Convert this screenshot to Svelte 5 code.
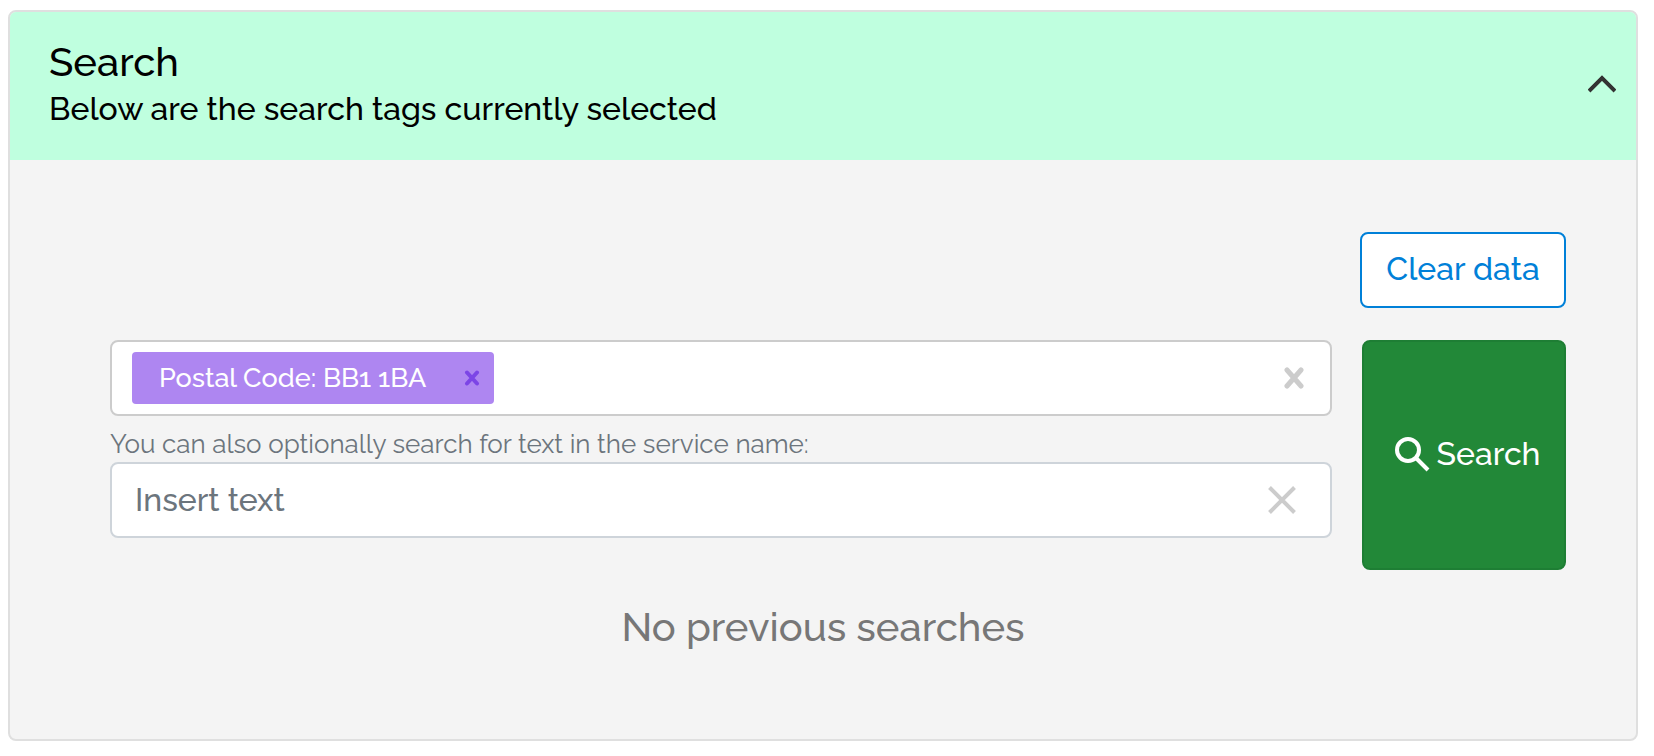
<script lang="ts">
  type Tag = { id: number; label: string; value: string };

  let open = $state(true);
  let tags = $state<Tag[]>([{ id: 1, label: 'Postal Code', value: 'BB1 1BA' }]);
  let serviceName = $state('');

  function removeTag(id: number): void {
    tags = tags.filter((tag) => tag.id !== id);
  }

  function clearTags(): void {
    tags = [];
  }

  function clearText(): void {
    serviceName = '';
  }

  function clearData(): void {
    clearTags();
    clearText();
  }
</script>

<section class="card">
  <header class="card-header">
    <div class="heading">
      <h2>Search</h2>
      <p>Below are the search tags currently selected</p>
    </div>
    <button
      type="button"
      class="icon-button toggle"
      class:closed={!open}
      aria-expanded={open}
      aria-label="Toggle search panel"
      onclick={() => (open = !open)}
    >
      <svg width="28" height="20" viewBox="0 0 28 20" aria-hidden="true">
        <path d="M1 16 L14 3 L27 16" />
      </svg>
    </button>
  </header>

  {#if open}
    <div class="card-body">
      <div class="actions">
        <button type="button" class="clear-data" onclick={clearData}>Clear data</button>
      </div>

      <form class="search-form" onsubmit={(event) => event.preventDefault()}>
        <div class="fields">
          <div class="field tags-field">
            <div class="tags">
              {#each tags as tag (tag.id)}
                <span class="tag">
                  <span>{tag.label}: {tag.value}</span>
                  <button
                    type="button"
                    class="icon-button remove"
                    aria-label={`Remove ${tag.label}`}
                    onclick={() => removeTag(tag.id)}
                  >
                    <svg width="16" height="16" viewBox="0 0 16 16" aria-hidden="true">
                      <path d="M3 2.5 L13 13.5 M13 2.5 L3 13.5" />
                    </svg>
                  </button>
                </span>
              {/each}
            </div>
            <button type="button" class="icon-button clear-tags" aria-label="Clear tags" onclick={clearTags}>
              <svg width="20" height="22" viewBox="0 0 20 22" aria-hidden="true">
                <path d="M3 3 L17 19 M17 3 L3 19" />
              </svg>
            </button>
          </div>

          <label for="service-name">You can also optionally search for text in the service name:</label>

          <div class="field text-field">
            <input id="service-name" type="text" placeholder="Insert text" bind:value={serviceName} />
            <button type="button" class="icon-button clear-text" aria-label="Clear text" onclick={clearText}>
              <svg width="28" height="28" viewBox="0 0 28 28" aria-hidden="true">
                <path d="M1.5 1.5 L26.5 26.5 M26.5 1.5 L1.5 26.5" />
              </svg>
            </button>
          </div>
        </div>

        <button type="submit" class="submit">
          <svg width="36" height="36" viewBox="0 0 36 36" aria-hidden="true">
            <circle cx="14" cy="14" r="11" />
            <path d="M22 22 L34 34" />
          </svg>
          <span>Search</span>
        </button>
      </form>

      <p class="empty">No previous searches</p>
    </div>
  {/if}
</section>

<style>
  :global(body) {
    background: #ffffff;
  }

  .card {
    margin: 10px 16px 16px 8px;
    border: 2px solid #dfdfdf;
    border-radius: 8px;
    background: #f4f4f4;
    font-family: Raleway, 'Open Sans', sans-serif;
    font-size: 32px;
    font-weight: 500;
    line-height: 48px;
    overflow: hidden;
  }

  h2,
  p {
    margin: 0;
    font-weight: 500;
  }

  button,
  input {
    box-sizing: border-box;
    font: inherit;
  }

  button {
    cursor: pointer;
  }

  .card-header {
    display: flex;
    align-items: center;
    justify-content: space-between;
    padding: 26px 20px 28px 39px;
    background: #bfffdf;
    color: #000000;
  }

  h2 {
    font-size: 40px;
    line-height: 48px;
  }

  .heading p {
    line-height: 46px;
  }

  .icon-button {
    display: flex;
    padding: 0;
    border: 0;
    background: transparent;
  }

  svg {
    flex: none;
    fill: none;
    stroke: currentColor;
  }

  .toggle {
    color: #333333;
    stroke-width: 4;
  }

  .toggle.closed {
    transform: rotate(180deg);
  }

  .card-body {
    padding: 72px 70px 84px 100px;
  }

  .actions {
    display: flex;
    justify-content: flex-end;
    margin-bottom: 32px;
  }

  .clear-data {
    min-width: 206px;
    height: 76px;
    padding: 0 16px 2px;
    border: 2px solid #0080d8;
    border-radius: 8px;
    background: #ffffff;
    color: #0080d8;
  }

  .search-form {
    display: flex;
    gap: 30px;
  }

  .fields {
    flex: 1;
    min-width: 0;
  }

  .field {
    box-sizing: border-box;
    display: flex;
    align-items: center;
    min-height: 76px;
    border: 2px solid #cccccc;
    border-radius: 8px;
    background: #ffffff;
  }

  .tags-field {
    padding: 10px 26px 10px 20px;
  }

  .tags {
    flex: 1;
    display: flex;
    flex-wrap: wrap;
    gap: 8px;
  }

  .tag {
    display: flex;
    align-items: center;
    gap: 38px;
    padding: 2px 14px 2px 27px;
    border-radius: 4px;
    background: #ae86f1;
    color: #ffffff;
    font-size: 27px;
  }

  .remove {
    color: #7c45e6;
    stroke-width: 4;
    stroke-linecap: round;
  }

  .clear-tags {
    color: #cccccc;
    stroke-width: 5;
    stroke-linecap: round;
  }

  label {
    display: block;
    padding: 10px 0 0;
    color: #6c757d;
    font-size: 26px;
    font-weight: 400;
    line-height: 36px;
  }

  .text-field {
    padding-right: 34px;
    border-color: #ced4da;
  }

  .text-field input {
    flex: 1;
    min-width: 0;
    height: 72px;
    padding: 0 24px 2px 23px;
    border: 0;
    border-radius: 8px;
    background: transparent;
    color: #495057;
  }

  .text-field input::placeholder {
    color: #6c757d;
    opacity: 1;
  }

  .clear-text {
    color: #cccccc;
    stroke-width: 4;
  }

  .submit {
    display: flex;
    align-items: center;
    justify-content: center;
    gap: 7px;
    min-width: 204px;
    min-height: 230px;
    padding: 0 12px 2px 16px;
    border: 2px solid #1e7e34;
    border-radius: 8px;
    background: #228838;
    color: #ffffff;
    stroke-width: 4;
  }

  .submit svg {
    margin-left: 2px;
  }

  .empty {
    padding: 29px 30px 0 0;
    color: #777777;
    font-size: 40px;
    line-height: 56px;
    text-align: center;
  }
</style>
